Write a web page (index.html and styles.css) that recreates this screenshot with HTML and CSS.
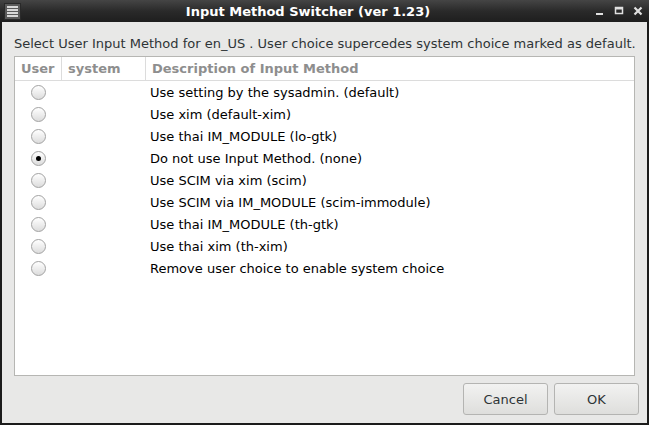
FILE: index.html
```html
<!DOCTYPE html>
<html>
<head>
<meta charset="utf-8">
<link rel="stylesheet" href="styles.css">
</head>
<body>
<div class="window">
  <div class="titlebar">
    <div class="menu-icon">
      <svg width="17" height="17" viewBox="0 0 17 17">
        <rect x="0.5" y="0.5" width="16" height="16" fill="#5a5a5a" stroke="#2a2a2a"/>
        <rect x="3" y="3" width="11" height="2" fill="#d8d8d8"/>
        <rect x="3" y="6" width="11" height="2" fill="#d8d8d8"/>
        <rect x="3" y="9" width="11" height="2" fill="#d8d8d8"/>
        <rect x="3" y="12" width="11" height="2" fill="#d8d8d8"/>
      </svg>
    </div>
    <div class="title">Input Method Switcher (ver 1.23)</div>
    <div class="controls">
      <svg width="10" height="10" viewBox="0 0 10 10"><rect x="1" y="7" width="7" height="2" fill="#e0e0e0"/></svg>
      <svg width="10" height="10" viewBox="0 0 10 10"><rect x="1.5" y="1.5" width="7" height="6" fill="none" stroke="#e0e0e0" stroke-width="1.5"/><rect x="1" y="1" width="8" height="2.5" fill="#e0e0e0"/></svg>
      <svg width="10" height="10" viewBox="0 0 10 10"><path d="M1.5 1.5 L8.5 8.5 M8.5 1.5 L1.5 8.5" stroke="#e0e0e0" stroke-width="2.2"/></svg>
    </div>
  </div>
  <div class="content">
    <div class="prompt">Select User Input Method for en_US . User choice supercedes system choice marked as default.</div>
    <div class="tree">
      <div class="header">
        <div class="col c-user">User</div>
        <div class="col c-sys">system</div>
        <div class="col c-desc">Description of Input Method</div>
      </div>
      <div class="rows">
        <div class="row"><div class="c-user"><span class="radio"></span></div><div class="c-sys"></div><div class="c-desc">Use setting by the sysadmin. (default)</div></div>
        <div class="row"><div class="c-user"><span class="radio"></span></div><div class="c-sys"></div><div class="c-desc">Use xim (default-xim)</div></div>
        <div class="row"><div class="c-user"><span class="radio"></span></div><div class="c-sys"></div><div class="c-desc">Use thai IM_MODULE (lo-gtk)</div></div>
        <div class="row"><div class="c-user"><span class="radio on"></span></div><div class="c-sys"></div><div class="c-desc">Do not use Input Method. (none)</div></div>
        <div class="row"><div class="c-user"><span class="radio"></span></div><div class="c-sys"></div><div class="c-desc">Use SCIM via xim (scim)</div></div>
        <div class="row"><div class="c-user"><span class="radio"></span></div><div class="c-sys"></div><div class="c-desc">Use SCIM via IM_MODULE (scim-immodule)</div></div>
        <div class="row"><div class="c-user"><span class="radio"></span></div><div class="c-sys"></div><div class="c-desc">Use thai IM_MODULE (th-gtk)</div></div>
        <div class="row"><div class="c-user"><span class="radio"></span></div><div class="c-sys"></div><div class="c-desc">Use thai xim (th-xim)</div></div>
        <div class="row"><div class="c-user"><span class="radio"></span></div><div class="c-sys"></div><div class="c-desc">Remove user choice to enable system choice</div></div>
      </div>
    </div>
    <div class="buttons">
      <button class="btn cancel">Cancel</button>
      <button class="btn ok">OK</button>
    </div>
  </div>
</div>
</body>
</html>
```

FILE: styles.css
```css
* { box-sizing: border-box; }
html, body { margin: 0; padding: 0; }
body {
  font-family: "DejaVu Sans", sans-serif;
  font-size: 13px;
  background: #1a1a1a;
}
.window {
  width: 649px;
  height: 425px;
  background: #1b1b1b;
  padding: 0 2px 2px 2px;
  display: flex;
  flex-direction: column;
}
.titlebar {
  height: 22px;
  flex: none;
  display: flex;
  align-items: center;
  background: linear-gradient(#454545, #2a2a2a 50%, #1e1e1e);
  margin: 0 -2px;
  padding: 0 4px;
}
.menu-icon { width: 17px; height: 17px; display: flex; }
.title {
  flex: 1;
  text-align: center;
  color: #ffffff;
  font-weight: bold;
  font-size: 13px;
}
.controls {
  display: flex;
  gap: 9px;
  align-items: center;
  padding-right: 2px;
}
.controls svg { display: block; }
.content {
  flex: 1;
  background: #e8e8e7;
  display: flex;
  flex-direction: column;
  padding: 14px 8px 8px 12px;
}
.prompt {
  color: #2e3436;
  line-height: 16px;
  height: 16px;
  white-space: nowrap;
  margin-bottom: 4px;
}
.tree {
  height: 320px;
  margin-right: 4px;
  background: #ffffff;
  border: 1px solid #b6b6b3;
  flex: none;
}
.header {
  display: flex;
  height: 24px;
  border-bottom: 1px solid #dcdcdc;
  color: #8e8e8e;
  font-weight: bold;
}
.header .col {
  line-height: 23px;
  padding-left: 6px;
}
.header .c-sys, .header .c-desc { border-left: 1px solid #dcdcdc; }
.c-user { width: 46px; flex: none; }
.c-sys { width: 84px; flex: none; }
.c-desc { flex: 1; }
.row {
  display: flex;
  height: 22px;
  align-items: center;
  color: #000000;
}
.row .c-desc { padding-left: 5px; }
.row .c-user { display: flex; justify-content: center; }
.radio {
  width: 15px;
  height: 15px;
  border-radius: 50%;
  border: 1px solid #a2a2a2;
  background: linear-gradient(#ffffff, #dcdcdc);
  display: block;
  position: relative;
}
.radio.on::after {
  content: "";
  position: absolute;
  left: 4px;
  top: 4px;
  width: 5px;
  height: 5px;
  border-radius: 50%;
  background: #000;
}
.buttons {
  display: flex;
  justify-content: flex-end;
  gap: 6px;
  margin-top: 7px;
}
.btn {
  height: 32px;
  font-family: "DejaVu Sans", sans-serif;
  font-size: 13px;
  color: #2e3436;
  border: 1px solid #b4b4b2;
  border-radius: 3px;
  background: linear-gradient(#f2f2f1, #dededc);
  padding: 0;
}
.cancel { width: 85px; }
.ok { width: 85px; }
```
